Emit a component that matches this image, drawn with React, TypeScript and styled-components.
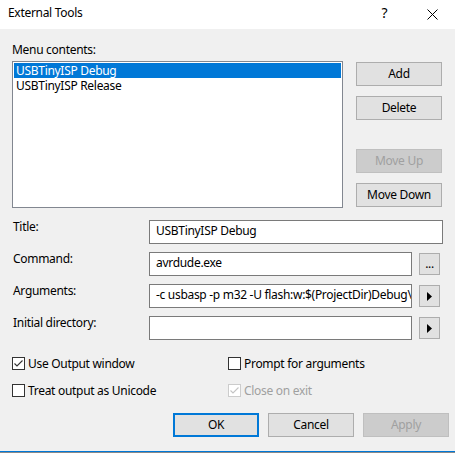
import React from "react";
import styled, { createGlobalStyle, css } from "styled-components";

const FONT = `"Segoe UI", "Noto Sans", "Open Sans", sans-serif`;

const Global = createGlobalStyle`
  html, body { margin: 0; padding: 0; background: #f0f0f0; }
  #root { width: 455px; height: 453px; overflow: hidden; }
  * { box-sizing: border-box; }
`;

const Window = styled.div`
  width: 455px;
  height: 453px;
  display: flex;
  flex-direction: column;
  background: #f0f0f0;
  font-family: ${FONT};
  font-size: 12px;
  letter-spacing: -0.3px;
  color: #000;
`;

const TitleBar = styled.div`
  height: 29px;
  flex: none;
  background: #fff;
  display: flex;
`;

const TitleText = styled.div`
  flex: 1;
  padding: 5px 0 0 8px;
  line-height: 16px;
`;

const CaptionButton = styled.div`
  width: 46px;
  display: flex;
  align-items: center;
  justify-content: center;
`;

const HelpGlyph = styled.span`
  font-size: 14px;
  line-height: 1;
  margin-top: -3px;
  margin-right: 3px;
`;

const Content = styled.div`
  flex: 1;
  display: flex;
  flex-direction: column;
  padding-top: 13px;
`;

const SectionLabel = styled.div`
  padding-left: 12px;
  line-height: 16px;
`;

const ListSection = styled.div`
  margin-top: 3px;
  padding-left: 12px;
  display: flex;
  gap: 13px;
  align-items: flex-start;
`;

const ListBox = styled.div`
  width: 331px;
  height: 147px;
  border: 1px solid #828790;
  background: #fff;
  padding: 1px;
`;

const ListItem = styled.div<{ $selected?: boolean }>`
  height: 15px;
  line-height: 15px;
  padding-left: 2px;
  white-space: nowrap;
  overflow: hidden;
  ${(p) =>
    p.$selected &&
    css`
      background: #0078d7;
      color: #fff;
    `}
`;

const ButtonColumn = styled.div`
  margin-top: 1px;
  height: 145px;
  width: 86px;
  display: flex;
  flex-direction: column;
  justify-content: space-between;
`;

const ButtonGroup = styled.div`
  display: flex;
  flex-direction: column;
  gap: 10px;
`;

const Button = styled.div<{ $disabled?: boolean; $default?: boolean }>`
  width: 86px;
  height: 24px;
  display: flex;
  align-items: center;
  justify-content: center;
  border: 1px solid #adadad;
  background: #e1e1e1;
  line-height: 16px;
  ${(p) =>
    p.$disabled &&
    css`
      background: #cccccc;
      border-color: #bfbfbf;
      color: #a0a0a0;
    `}
  ${(p) =>
    p.$default &&
    css`
      border: 2px solid #0078d7;
    `}
`;

const Form = styled.div`
  margin-top: 12px;
  padding: 0 12px 0 13px;
  display: flex;
  flex-direction: column;
  gap: 8px;
`;

const FormRow = styled.div`
  display: flex;
  height: 24px;
  align-items: flex-start;
`;

const FieldLabel = styled.div`
  width: 136px;
  flex: none;
  line-height: 14px;
`;

const TextBox = styled.div`
  flex: 1;
  min-width: 0;
  height: 24px;
  border: 1px solid #7a7a7a;
  background: #fff;
  padding: 1px 2px 0 6px;
  line-height: 17px;
  white-space: nowrap;
  overflow: hidden;
`;

const SideButton = styled.div`
  width: 21px;
  height: 22px;
  flex: none;
  margin: 1px 3px 0 7px;
  border: 1px solid #adadad;
  background: #e1e1e1;
  display: flex;
  align-items: center;
  justify-content: center;
  line-height: 12px;
`;

const CheckGrid = styled.div`
  margin-top: 15px;
  padding-left: 12px;
  display: grid;
  grid-template-columns: 216px auto;
  row-gap: 10px;
`;

const CheckRow = styled.div<{ $disabled?: boolean }>`
  height: 17px;
  display: flex;
  align-items: center;
  gap: 3px;
  line-height: 16px;
  color: ${(p) => (p.$disabled ? "#a0a0a0" : "#000")};
`;

const Box = styled.span<{ $disabled?: boolean }>`
  width: 13px;
  height: 13px;
  flex: none;
  border: 1px solid ${(p) => (p.$disabled ? "#cccccc" : "#333333")};
  background: #fff;
  display: flex;
  align-items: center;
  justify-content: center;
`;

const ActionRow = styled.div`
  margin-top: 14px;
  display: flex;
  justify-content: flex-end;
  gap: 9px;
  padding-right: 6px;
`;

const BottomEdge = styled.div`
  height: 2px;
  flex: none;
  border-top: 1px solid #0078d7;
  background: #8a8a8a;
`;

const Check = ({ color }: { color: string }) => (
  <svg width="11" height="11" viewBox="0 0 11 11">
    <polyline points="1.5,5.5 4,8 9.5,2.5" fill="none" stroke={color} strokeWidth="1.1" />
  </svg>
);

const CheckBox = ({
  label,
  checked,
  disabled,
}: {
  label: string;
  checked?: boolean;
  disabled?: boolean;
}) => (
  <CheckRow $disabled={disabled}>
    <Box $disabled={disabled}>{checked && <Check color={disabled ? "#c4c4c4" : "#333"} />}</Box>
    <span>{label}</span>
  </CheckRow>
);

const Arrow = () => (
  <svg width="5" height="9" viewBox="0 0 5 9">
    <polygon points="0,0 5,4.5 0,9" fill="#000" />
  </svg>
);

const CloseIcon = () => (
  <svg width="11" height="11" viewBox="0 0 11 11">
    <path d="M0.5 0.5 L10.5 10.5 M10.5 0.5 L0.5 10.5" stroke="#000" strokeWidth="1" fill="none" />
  </svg>
);

export default function App() {
  return (
    <>
      <Global />
      <Window>
        <TitleBar>
          <TitleText>External Tools</TitleText>
          <CaptionButton>
            <HelpGlyph>?</HelpGlyph>
          </CaptionButton>
          <CaptionButton>
            <CloseIcon />
          </CaptionButton>
        </TitleBar>
        <Content>
          <SectionLabel>Menu contents:</SectionLabel>
          <ListSection>
            <ListBox>
              <ListItem $selected>USBTinyISP Debug</ListItem>
              <ListItem>USBTinyISP Release</ListItem>
            </ListBox>
            <ButtonColumn>
              <ButtonGroup>
                <Button>Add</Button>
                <Button>Delete</Button>
              </ButtonGroup>
              <ButtonGroup>
                <Button $disabled>Move Up</Button>
                <Button>Move Down</Button>
              </ButtonGroup>
            </ButtonColumn>
          </ListSection>
          <Form>
            <FormRow>
              <FieldLabel>Title:</FieldLabel>
              <TextBox>USBTinyISP Debug</TextBox>
            </FormRow>
            <FormRow>
              <FieldLabel>Command:</FieldLabel>
              <TextBox>avrdude.exe</TextBox>
              <SideButton>...</SideButton>
            </FormRow>
            <FormRow>
              <FieldLabel>Arguments:</FieldLabel>
              <TextBox>-c usbasp -p m32 -U flash:w:$(ProjectDir)Debug\$(TargetName).hex:i</TextBox>
              <SideButton>
                <Arrow />
              </SideButton>
            </FormRow>
            <FormRow>
              <FieldLabel>Initial directory:</FieldLabel>
              <TextBox />
              <SideButton>
                <Arrow />
              </SideButton>
            </FormRow>
          </Form>
          <CheckGrid>
            <CheckBox label="Use Output window" checked />
            <CheckBox label="Prompt for arguments" />
            <CheckBox label="Treat output as Unicode" />
            <CheckBox label="Close on exit" checked disabled />
          </CheckGrid>
          <ActionRow>
            <Button $default>OK</Button>
            <Button>Cancel</Button>
            <Button $disabled>Apply</Button>
          </ActionRow>
        </Content>
        <BottomEdge />
      </Window>
    </>
  );
}
